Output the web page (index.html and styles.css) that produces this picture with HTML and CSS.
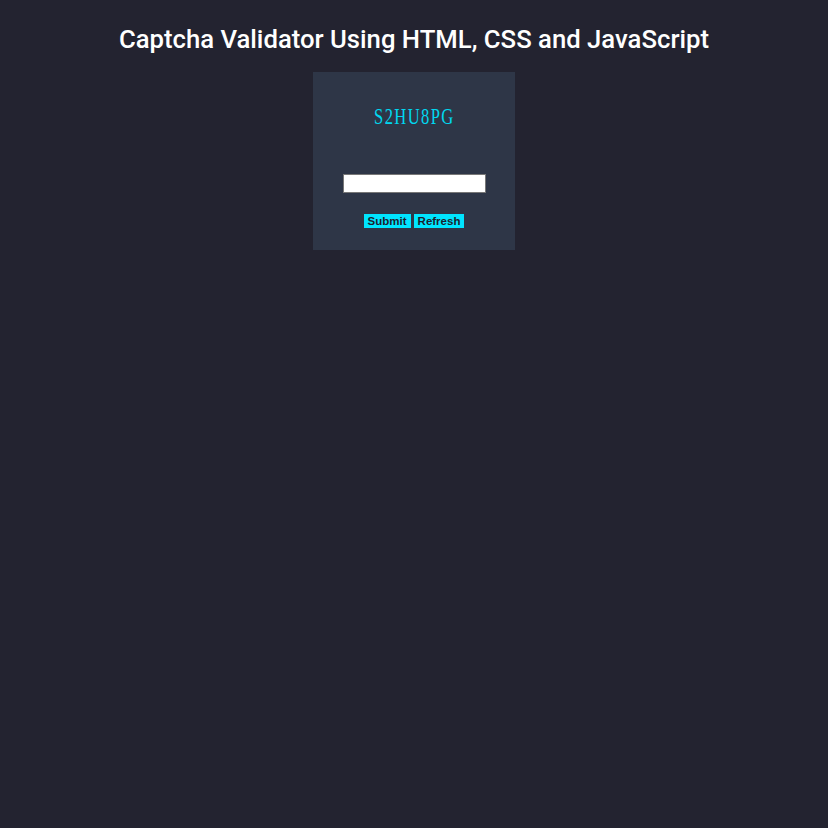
FILE: index.html
```html
<!DOCTYPE html>
<html lang="en">
<head>
    <meta charset="UTF-8">
    <meta name="viewport" content="width=device-width, initial-scale=1.0">
    <title>Captcha Validator</title>
    <link rel="stylesheet" href="styles.css">
</head>
<body>

<h1>Captcha Validator Using HTML, CSS and JavaScript</h1>

<div class="card">
    <div class="captcha" id="captcha">S2HU8PG</div>
    <input type="text" id="answer" class="answer">
    <div class="actions">
        <button class="btn" id="submit">Submit</button>
        <button class="btn" id="refresh">Refresh</button>
    </div>
</div>

</body>
</html>
```

FILE: styles.css
```css
/* Dark captcha page */
body {
    background-color: #232330;
    color: #fff;
    font-family: Roboto, sans-serif;
    margin: 0;
    display: flex;
    flex-direction: column;
    align-items: center;
}
h1 {
    margin: 23px 0 0;
    font-size: 25.7px;
    line-height: 32px;
    font-weight: 500;
    text-align: center;
}
.card {
    background-color: #2e3647;
    width: 202px;
    height: 178px;
    box-sizing: border-box;
    margin-top: 17px;
    padding-top: 31px;
    display: flex;
    flex-direction: column;
    align-items: center;
}
.captcha {
    font-family: 'Liberation Serif', serif;
    font-size: 24px;
    line-height: 26px;
    letter-spacing: 2px;
    color: #00d8f0;
    transform: scaleX(0.69);
}
.answer {
    margin-top: 45px;
    width: 143px;
    height: 19px;
    box-sizing: border-box;
    border: 1px solid #777;
    padding: 0 3px;
    background-color: #fff;
    outline: none;
}
.actions {
    margin-top: 21px;
    display: flex;
    gap: 3px;
}
.btn {
    font-family: 'Liberation Sans', Arial, sans-serif;
    font-size: 11.5px;
    font-weight: bold;
    line-height: 14px;
    height: 14px;
    padding: 0 4px;
    border: none;
    background-color: #00e5ff;
    color: #1c1f2e;
    cursor: pointer;
}
```
